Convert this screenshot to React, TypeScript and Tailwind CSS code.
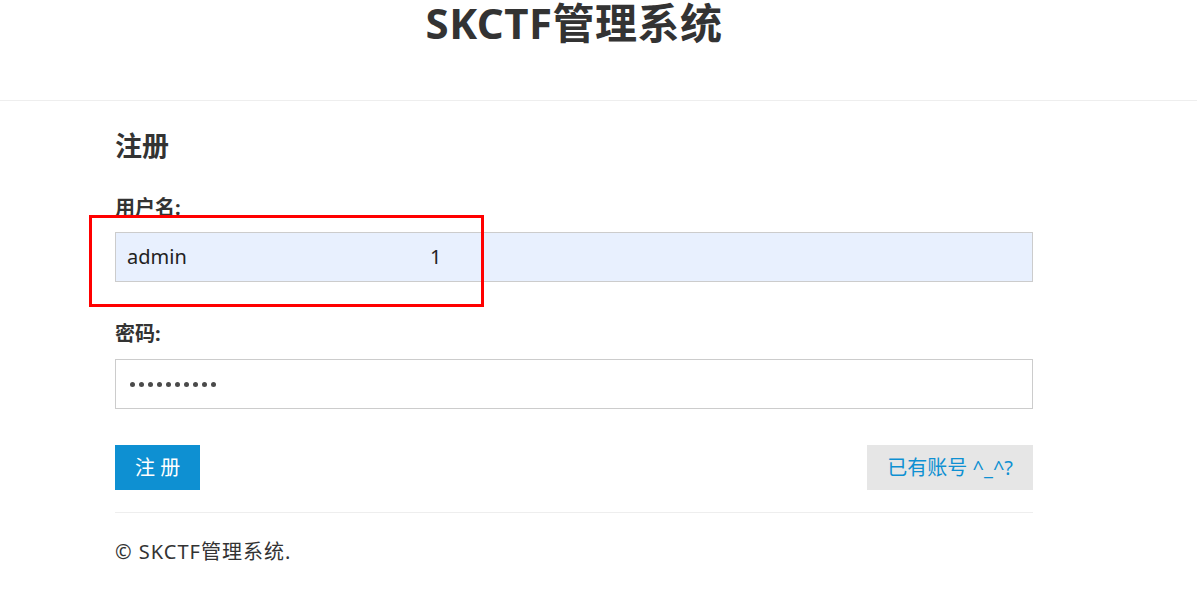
import React from "react";

const font = { fontFamily: '"Noto Sans", "Noto Sans CJK SC", sans-serif' };

export default function App() {
  return (
    <div className="relative min-h-[603px] w-[1197px] bg-white text-[#333]" style={font}>
      <header className="h-[101px] border-b border-[#eee] pt-[2px]">
        <div className="ml-[115px] w-[918px]">
          <h1 className="text-center text-[42px] font-bold leading-[42px] tracking-[0.5px]">SKCTF管理系统</h1>
        </div>
      </header>

      <main className="ml-[115px] w-[918px] pt-[27px]">
        <h2 className="text-[27px] font-bold leading-[36px]">注册</h2>

        <form className="mt-[28px] flex flex-col" onSubmit={(e) => e.preventDefault()}>
          <label className="text-[20px] font-bold leading-[32px]">用户名:</label>
          <div className="mt-[8px] flex h-[50px] items-center border border-[#ccc] bg-[#e8f0fe] pl-[11px] text-[20px] text-[#222]">
            <span className="w-[303px]">admin</span>
            <span>1</span>
          </div>

          <label className="mt-[36px] text-[20px] font-bold leading-[32px]">密码:</label>
          <div className="mt-[9px] flex h-[50px] items-center gap-[4px] border border-[#ccc] bg-white pl-[14px]">
            {Array.from({ length: 10 }).map((_, i) => (
              <span key={i} className="h-[5px] w-[5px] rounded-full bg-[#4a4a4a]" />
            ))}
          </div>

          <div className="mt-[36px] flex items-center justify-between">
            <button type="submit" className="h-[45px] bg-[#0e90d2] px-[20px] text-[20px] leading-none text-white">
              注 册
            </button>
            <button type="button" className="h-[45px] bg-[#e6e6e6] px-[20px] text-[20px] leading-none text-[#0e90d2]">
              已有账号 ^_^?
            </button>
          </div>
        </form>

        <hr className="mt-[22px] border-t border-[#eee]" />
        <footer className="pt-[23px] text-[20px] leading-[32px] tracking-[1px]">© SKCTF管理系统.</footer>
      </main>

      <div className="pointer-events-none absolute left-[89px] top-[215px] h-[92px] w-[395px] border-[3px] border-[#f00]" />
    </div>
  );
}
